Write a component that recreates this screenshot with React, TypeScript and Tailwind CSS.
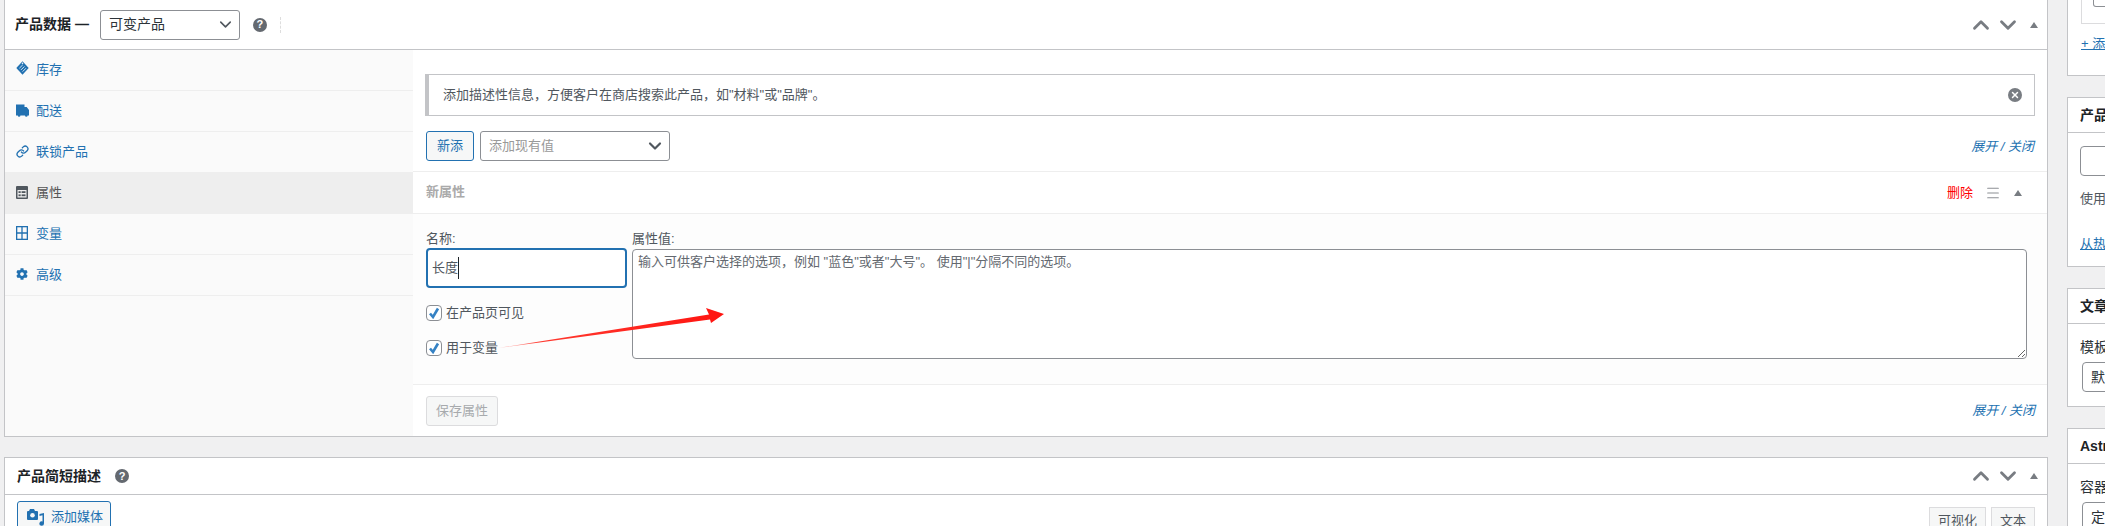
import { ChevronDown, ChevronUp, Link as LinkIcon, Menu, X } from 'lucide-react';
import { FaCog } from 'react-icons/fa';

const FONT = "font-['Liberation_Sans','Noto_Sans_CJK_SC',sans-serif]";

function TagIcon() {
  return (
    <svg viewBox="0 0 13 14" className="h-[14px] w-[13px] -translate-y-[2px]">
      <path d="M6.5 0.3 L12.7 7 L6.5 13.7 L0.3 7 Z" fill="#2271b1" />
      <path d="M3.4 7.2 L6.8 3.8 M5 8.9 L8.4 5.5 M6.6 10.6 L10 7.2" stroke="#cfe2f1" strokeWidth="1" fill="none" />
      <circle cx="6.5" cy="2.2" r="0.8" fill="#fff" />
    </svg>
  );
}

function TruckIcon() {
  return (
    <svg viewBox="0 0 13 13" className="h-[13px] w-[13px] -translate-y-[1px] fill-[#2271b1]">
      <path d="M0 0.5h8.5v2.5h2.2L13 6v5.5h-1.4a1.3 1.3 0 0 1-2.6 0H4.4a1.3 1.3 0 0 1-2.6 0H0z" />
    </svg>
  );
}

function AttrIcon() {
  return (
    <svg viewBox="0 0 12 13" className="h-[13px] w-3 -translate-y-[1px]">
      <rect width="12" height="13" rx="1" fill="#50575e" />
      <rect x="1.5" y="4" width="9" height="7.5" fill="#eee" />
      <rect x="2.5" y="5.2" width="2.2" height="1.8" fill="#50575e" />
      <rect x="2.5" y="8.4" width="2.2" height="1.8" fill="#50575e" />
      <rect x="5.6" y="5.2" width="3.9" height="1.8" fill="#50575e" />
      <rect x="5.6" y="8.4" width="3.9" height="1.8" fill="#50575e" />
    </svg>
  );
}

function GridIcon() {
  return (
    <svg viewBox="0 0 12 14" className="h-[14px] w-3 -translate-y-[1px] fill-none stroke-[#2271b1] stroke-[1.3]">
      <rect x="0.65" y="0.65" width="10.7" height="12.7" />
      <path d="M6 0.65 V13.35 M0.65 7 H11.35" />
    </svg>
  );
}

function MediaIcon() {
  return (
    <svg viewBox="0 0 18 19" className="h-[19px] w-[18px] fill-[#2271b1]">
      <path d="M3 1h4l1 2h2a1 1 0 0 1 1 1v7a1 1 0 0 1-1 1H1a1 1 0 0 1-1-1V4a1 1 0 0 1 1-1h1z" />
      <circle cx="5.5" cy="7.3" r="2.3" fill="#f6f7f7" />
      <path d="M17 5v10.5a2.3 2.3 0 1 1-1.5-2.1V7.2l-3 .7V6z" />
    </svg>
  );
}

function Help() {
  return (
    <div className="flex h-[14px] w-[14px] items-center justify-center rounded-full bg-[#646970] text-[11px] font-bold leading-none text-white">
      ?
    </div>
  );
}

function BoxControls() {
  return (
    <div className="flex items-center text-[#787c82]">
      <ChevronUp size={26} strokeWidth={2.6} />
      <ChevronDown size={26} strokeWidth={2.6} className="ml-[1px]" />
      <div className="ml-[9px] mr-[4px] h-0 w-0 border-x-[4px] border-b-[6px] border-x-transparent border-b-[#787c82]" />
    </div>
  );
}

function ToggleLink() {
  return <span className="text-[13px] italic text-[#2271b1]">展开 / 关闭</span>;
}

function Check({ label }: { label: string }) {
  return (
    <div className="flex h-4 items-center">
      <div className="flex h-4 w-4 items-center justify-center rounded-[4px] border border-[#8c8f94] bg-white">
        <svg viewBox="0 0 12 12" className="h-3 w-3 fill-none stroke-[#3582c4] stroke-[2.6]">
          <path d="M2 6.5 L5 10 L10 1.5" />
        </svg>
      </div>
      <span className="ml-[4px] text-[13px] text-[#50575e]">{label}</span>
    </div>
  );
}

const TABS = [
  { label: '库存', icon: <TagIcon /> },
  { label: '配送', icon: <TruckIcon /> },
  { label: '联锁产品', icon: <LinkIcon size={13} strokeWidth={2.4} className="-translate-y-[1px] text-[#2271b1]" /> },
  { label: '属性', icon: <AttrIcon />, active: true },
  { label: '变量', icon: <GridIcon /> },
  { label: '高级', icon: <FaCog size={12} className="-translate-y-[1px] text-[#2271b1]" /> },
];

function ProductData() {
  return (
    <section className="h-[437px] border-x border-b border-[#c3c4c7] bg-white">
      <header className="flex h-[50px] items-center border-b border-[#c3c4c7] pl-[10px] pr-[5px]">
        <span className="text-[14px] font-semibold text-[#1d2327]">产品数据 —</span>
        <div className="ml-[11px] flex h-[30px] w-[140px] items-center justify-between rounded-[3px] border border-[#8c8f94] pl-2 pr-[4px] text-[14px] text-[#2c3338]">
          可变产品
          <ChevronDown size={19} strokeWidth={2} className="text-[#50575e]" />
        </div>
        <div className="ml-[13px]"><Help /></div>
        <div className="ml-[13px] h-4 border-l border-dashed border-[#ddd]" />
        <div className="ml-auto"><BoxControls /></div>
      </header>
      <div className="flex h-[386px]">
        <nav className="w-[408px] shrink-0 bg-[#fafafa]">
          {TABS.map((tab) => (
            <div
              key={tab.label}
              className={`flex h-[41px] items-center border-b border-[#eee] pl-[11px] text-[13px] ${tab.active ? 'bg-[#eee] text-[#555]' : 'text-[#2271b1]'}`}
            >
              <span className="flex w-[20px] justify-start">{tab.icon}</span>
              {tab.label}
            </div>
          ))}
        </nav>
        <div className="flex min-w-0 flex-1 flex-col">
          <div className="mx-[12px] mt-[24px] flex h-[42px] items-center justify-between border border-l-4 border-[#c3c4c7] pl-[14px] pr-[12px] text-[13px] text-[#50575e]">
            添加描述性信息，方便客户在商店搜索此产品，如"材料"或"品牌"。
            <div className="flex h-[14px] w-[14px] items-center justify-center rounded-full bg-[#787c82]">
              <X size={10} strokeWidth={3.5} className="text-white" />
            </div>
          </div>
          <div className="mx-[13px] mt-[15px] flex h-[30px] items-center">
            <div className="flex h-[30px] w-[48px] items-center justify-center rounded-[3px] border border-[#2271b1] bg-[#f6f7f7] text-[13px] text-[#2271b1]">
              新添
            </div>
            <div className="ml-[6px] flex h-[30px] w-[190px] items-center justify-between rounded-[3px] border border-[#8c8f94] pl-2 pr-[4px] text-[13px] text-[#999]">
              添加现有值
              <ChevronDown size={20} strokeWidth={2.6} className="text-[#50575e]" />
            </div>
            <div className="ml-auto"><ToggleLink /></div>
          </div>
          <div className="mt-[10px] flex h-[43px] items-center border-y border-[#eee] pl-[13px] pr-[25px] text-[13px]">
            <span className="-translate-y-[1px] font-semibold text-[#aaa]">新属性</span>
            <span className="ml-auto text-[#f00]">删除</span>
            <Menu size={16} strokeWidth={1.6} className="ml-[12px] text-[#8c8f94]" />
            <div className="ml-[13px] h-0 w-0 border-x-[4px] border-b-[6px] border-x-transparent border-b-[#787c82]" />
          </div>
          <div className="relative flex h-[171px] border-b border-[#eee] bg-[#fdfdfd] pl-[13px] pr-[20px] pt-[15px]">
            <div className="w-[201px] shrink-0">
              <div className="h-[18px] text-[13px] leading-[20px] text-[#50575e]">名称:</div>
              <div className="mt-[1px] flex h-[40px] items-center rounded-[4px] border-2 border-[#2271b1] bg-white pl-[4px] text-[13px] text-[#50575e]">
                长度
                <span className="h-[22px] border-l border-[#1d2327]" />
              </div>
              <div className="mt-[17px]"><Check label="在产品页可见" /></div>
              <div className="mt-[19px]"><Check label="用于变量" /></div>
            </div>
            <div className="ml-[5px] flex min-w-0 flex-1 flex-col">
              <div className="h-[18px] text-[13px] leading-[20px] text-[#50575e]">属性值:</div>
              <textarea
                readOnly
                placeholder={'输入可供客户选择的选项，例如 "蓝色"或者"大号"。 使用"|"分隔不同的选项。'}
                className="mt-[2px] h-[110px] resize-y rounded-[4px] border border-[#8c8f94] bg-white px-[5px] py-[2px] text-[13px] leading-[20px] text-[#50575e] placeholder:text-[#646970] outline-none"
              />
            </div>
            {/* red annotation arrow drawn over the form */}
            <svg viewBox="0 0 230 45" className="pointer-events-none absolute left-[85px] top-[92px] h-[45px] w-[230px]">
              <defs>
                <linearGradient id="arrowFade" x1="0" x2="1" y1="0" y2="0">
                  <stop offset="0" stopColor="#ffd0d0" />
                  <stop offset="0.18" stopColor="#ff3a30" />
                  <stop offset="1" stopColor="#ff1410" />
                </linearGradient>
              </defs>
              <path d="M0 42 L211 8.5 L208 2 L226 8 L213 17 L212 13.5 Z" fill="url(#arrowFade)" />
            </svg>
          </div>
          <div className="flex flex-1 items-center justify-between pl-[13px] pr-[12px]">
            <div className="flex h-[30px] w-[72px] items-center justify-center rounded-[3px] border border-[#dcdcde] bg-[#f6f7f7] text-[13px] text-[#a7aaad]">
              保存属性
            </div>
            <ToggleLink />
          </div>
        </div>
      </div>
    </section>
  );
}

function ShortDescription() {
  return (
    <section className="mt-[20px] border border-[#c3c4c7] bg-white">
      <header className="flex h-[37px] items-center border-b border-[#c3c4c7] pl-[12px] pr-[5px]">
        <span className="text-[14px] font-semibold text-[#1d2327]">产品简短描述</span>
        <div className="ml-[14px]"><Help /></div>
        <div className="ml-auto"><BoxControls /></div>
      </header>
      <div className="flex items-start px-[12px] pt-[6px]">
        <div className="flex h-[32px] w-[94px] items-center gap-[6px] rounded-[3px] border border-[#2271b1] bg-[#f6f7f7] pl-[9px] text-[13px] text-[#2271b1]">
          <MediaIcon />
          添加媒体
        </div>
        <div className="ml-auto mt-[6px] flex gap-[5px]">
          <div className="flex h-[30px] w-[57px] justify-center border border-[#dcdcde] bg-[#f6f7f7] pt-[3px] text-[13px] text-[#50575e]">可视化</div>
          <div className="flex h-[30px] w-[44px] justify-center border border-[#dcdcde] bg-[#f6f7f7] pt-[3px] text-[13px] text-[#50575e]">文本</div>
        </div>
      </div>
    </section>
  );
}

function Sidebar() {
  return (
    <aside className="ml-[19px] w-[280px] shrink-0 text-[13px] text-[#50575e]">
      <div className="h-[76px] border-x border-b border-[#c3c4c7] bg-white pl-[13px]">
        <div className="h-[24px] border-x border-b border-[#dcdcde] pl-[11px]">
          <div className="h-[7px] w-[80px] rounded-b-[3px] border-x border-b border-[#8c8f94]" />
        </div>
        <div className="mt-[11px] whitespace-nowrap leading-[18px] text-[#2271b1] underline">+ 添加新属性</div>
      </div>
      <div className="mt-[21px] h-[170px] border border-[#c3c4c7] bg-white">
        <div className="flex h-[35px] items-center border-b border-[#c3c4c7] pl-[12px] text-[14px] font-semibold text-[#1d2327]">产品标签</div>
        <div className="mx-[12px] mt-[13px] h-[30px] rounded-[4px] border border-[#8c8f94]" />
        <div className="ml-[12px] mt-[14px] leading-[18px]">使用逗号分隔标签</div>
        <div className="ml-[12px] mt-[27px] leading-[18px] text-[#2271b1] underline">从热门标签中选择</div>
      </div>
      <div className="mt-[21px] h-[119px] border border-[#c3c4c7] bg-white">
        <div className="flex h-[35px] items-center border-b border-[#c3c4c7] pl-[12px] text-[14px] font-semibold text-[#1d2327]">文章属性</div>
        <div className="ml-[12px] mt-[14px] text-[14px] leading-[18px] text-[#2c3338]">模板</div>
        <div className="ml-[14px] mt-[6px] flex h-[30px] w-[200px] items-center rounded-[4px] border border-[#8c8f94] pl-2 text-[14px] text-[#2c3338]">默认模板</div>
      </div>
      <div className="mt-[21px] h-[120px] border border-[#c3c4c7] bg-white">
        <div className="flex h-[35px] items-center border-b border-[#c3c4c7] pl-[12px] text-[14px] font-semibold text-[#1d2327]">Astra 设置</div>
        <div className="ml-[12px] mt-[14px] text-[14px] leading-[18px] text-[#2c3338]">容器</div>
        <div className="ml-[14px] mt-[6px] flex h-[30px] w-[200px] items-center rounded-[4px] border border-[#8c8f94] pl-2 text-[14px] text-[#2c3338]">定制程序设置</div>
      </div>
    </aside>
  );
}

export default function App() {
  return (
    <div className={`flex h-[526px] w-full overflow-hidden bg-[#f0f0f1] ${FONT}`}>
      <main className="ml-[4px] w-[2044px] shrink-0">
        <ProductData />
        <ShortDescription />
      </main>
      <Sidebar />
    </div>
  );
}
